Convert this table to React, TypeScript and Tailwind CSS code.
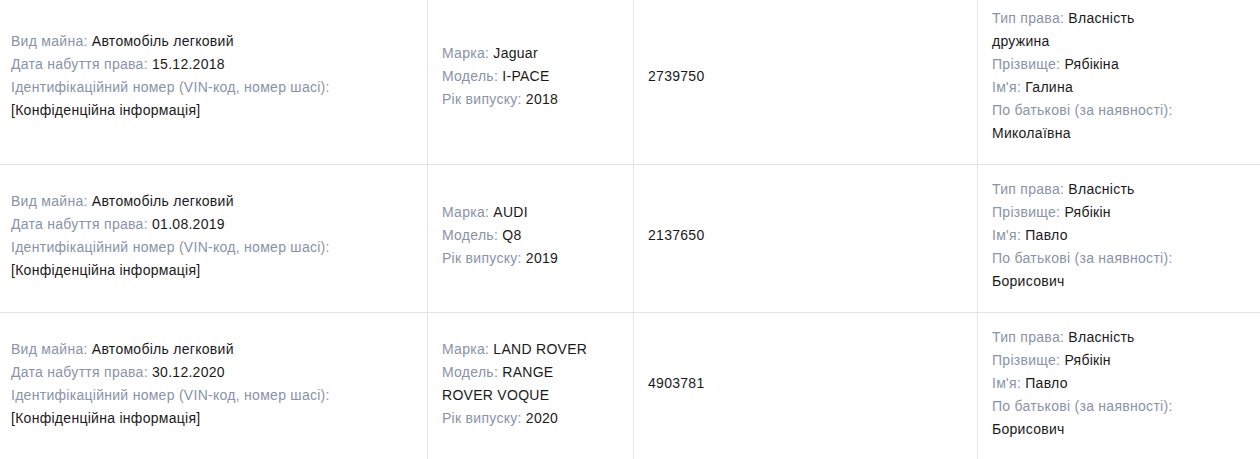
import React from "react"

type Field = [string, string]

interface Row {
  property: Field[]
  car: Field[]
  price: string
  owner: Field[]
}

const rows: Row[] = [
  {
    property: [
      ["Вид майна:", "Автомобіль легковий"],
      ["Дата набуття права:", "15.12.2018"],
      ["Ідентифікаційний номер (VIN-код, номер шасі):", "[Конфіденційна інформація]"],
    ],
    car: [
      ["Марка:", "Jaguar"],
      ["Модель:", "I-PACE"],
      ["Рік випуску:", "2018"],
    ],
    price: "2739750",
    owner: [
      ["Тип права:", "Власність дружина"],
      ["Прізвище:", "Рябікіна"],
      ["Ім'я:", "Галина"],
      ["По батькові (за наявності):", "Миколаївна"],
    ],
  },
  {
    property: [
      ["Вид майна:", "Автомобіль легковий"],
      ["Дата набуття права:", "01.08.2019"],
      ["Ідентифікаційний номер (VIN-код, номер шасі):", "[Конфіденційна інформація]"],
    ],
    car: [
      ["Марка:", "AUDI"],
      ["Модель:", "Q8"],
      ["Рік випуску:", "2019"],
    ],
    price: "2137650",
    owner: [
      ["Тип права:", "Власність"],
      ["Прізвище:", "Рябікін"],
      ["Ім'я:", "Павло"],
      ["По батькові (за наявності):", "Борисович"],
    ],
  },
  {
    property: [
      ["Вид майна:", "Автомобіль легковий"],
      ["Дата набуття права:", "30.12.2020"],
      ["Ідентифікаційний номер (VIN-код, номер шасі):", "[Конфіденційна інформація]"],
    ],
    car: [
      ["Марка:", "LAND ROVER"],
      ["Модель:", "RANGE ROVER VOQUE"],
      ["Рік випуску:", "2020"],
    ],
    price: "4903781",
    owner: [
      ["Тип права:", "Власність"],
      ["Прізвище:", "Рябікін"],
      ["Ім'я:", "Павло"],
      ["По батькові (за наявності):", "Борисович"],
    ],
  },
]

function Fields({ items }: { items: Field[] }) {
  return (
    <>
      {items.map(([label, value]) => (
        <div key={label}>
          <span className="text-[#8a93a7]">{label}</span> <span>{value}</span>
        </div>
      ))}
    </>
  )
}

export default function App() {
  return (
    <div
      className="w-[1260px] bg-white text-[14px] leading-[23px] tracking-[0.28px] text-[#1a1a1a]"
      style={{ fontFamily: '"Liberation Sans", Arial, sans-serif' }}
    >
      {rows.map((row, i) => (
        <div
          key={i}
          className={`grid grid-cols-[427px_206px_344px_1fr] border-b border-[#e2e4e9] ${i === 0 ? "pt-[7px]" : "pt-[13px]"}`}
        >
          <div className="flex flex-col justify-center pl-[11px] pr-[14px] pb-[19px]">
            <Fields items={row.property} />
          </div>
          <div className="-mt-[13px] flex flex-col justify-center border-l border-[#e2e4e9] px-[14px] pt-[13px] pb-[19px]">
            <div className="max-w-[158px]">
              <Fields items={row.car} />
            </div>
          </div>
          <div className="-mt-[13px] flex flex-col justify-center border-l border-[#e2e4e9] px-[14px] pt-[13px] pb-[19px]">
            <div>{row.price}</div>
          </div>
          <div className="-mt-[13px] flex flex-col justify-start border-l border-[#e2e4e9] px-[14px] pt-[13px] pb-[19px]">
            <div className="max-w-[194px]">
              <Fields items={row.owner} />
            </div>
          </div>
        </div>
      ))}
    </div>
  )
}
